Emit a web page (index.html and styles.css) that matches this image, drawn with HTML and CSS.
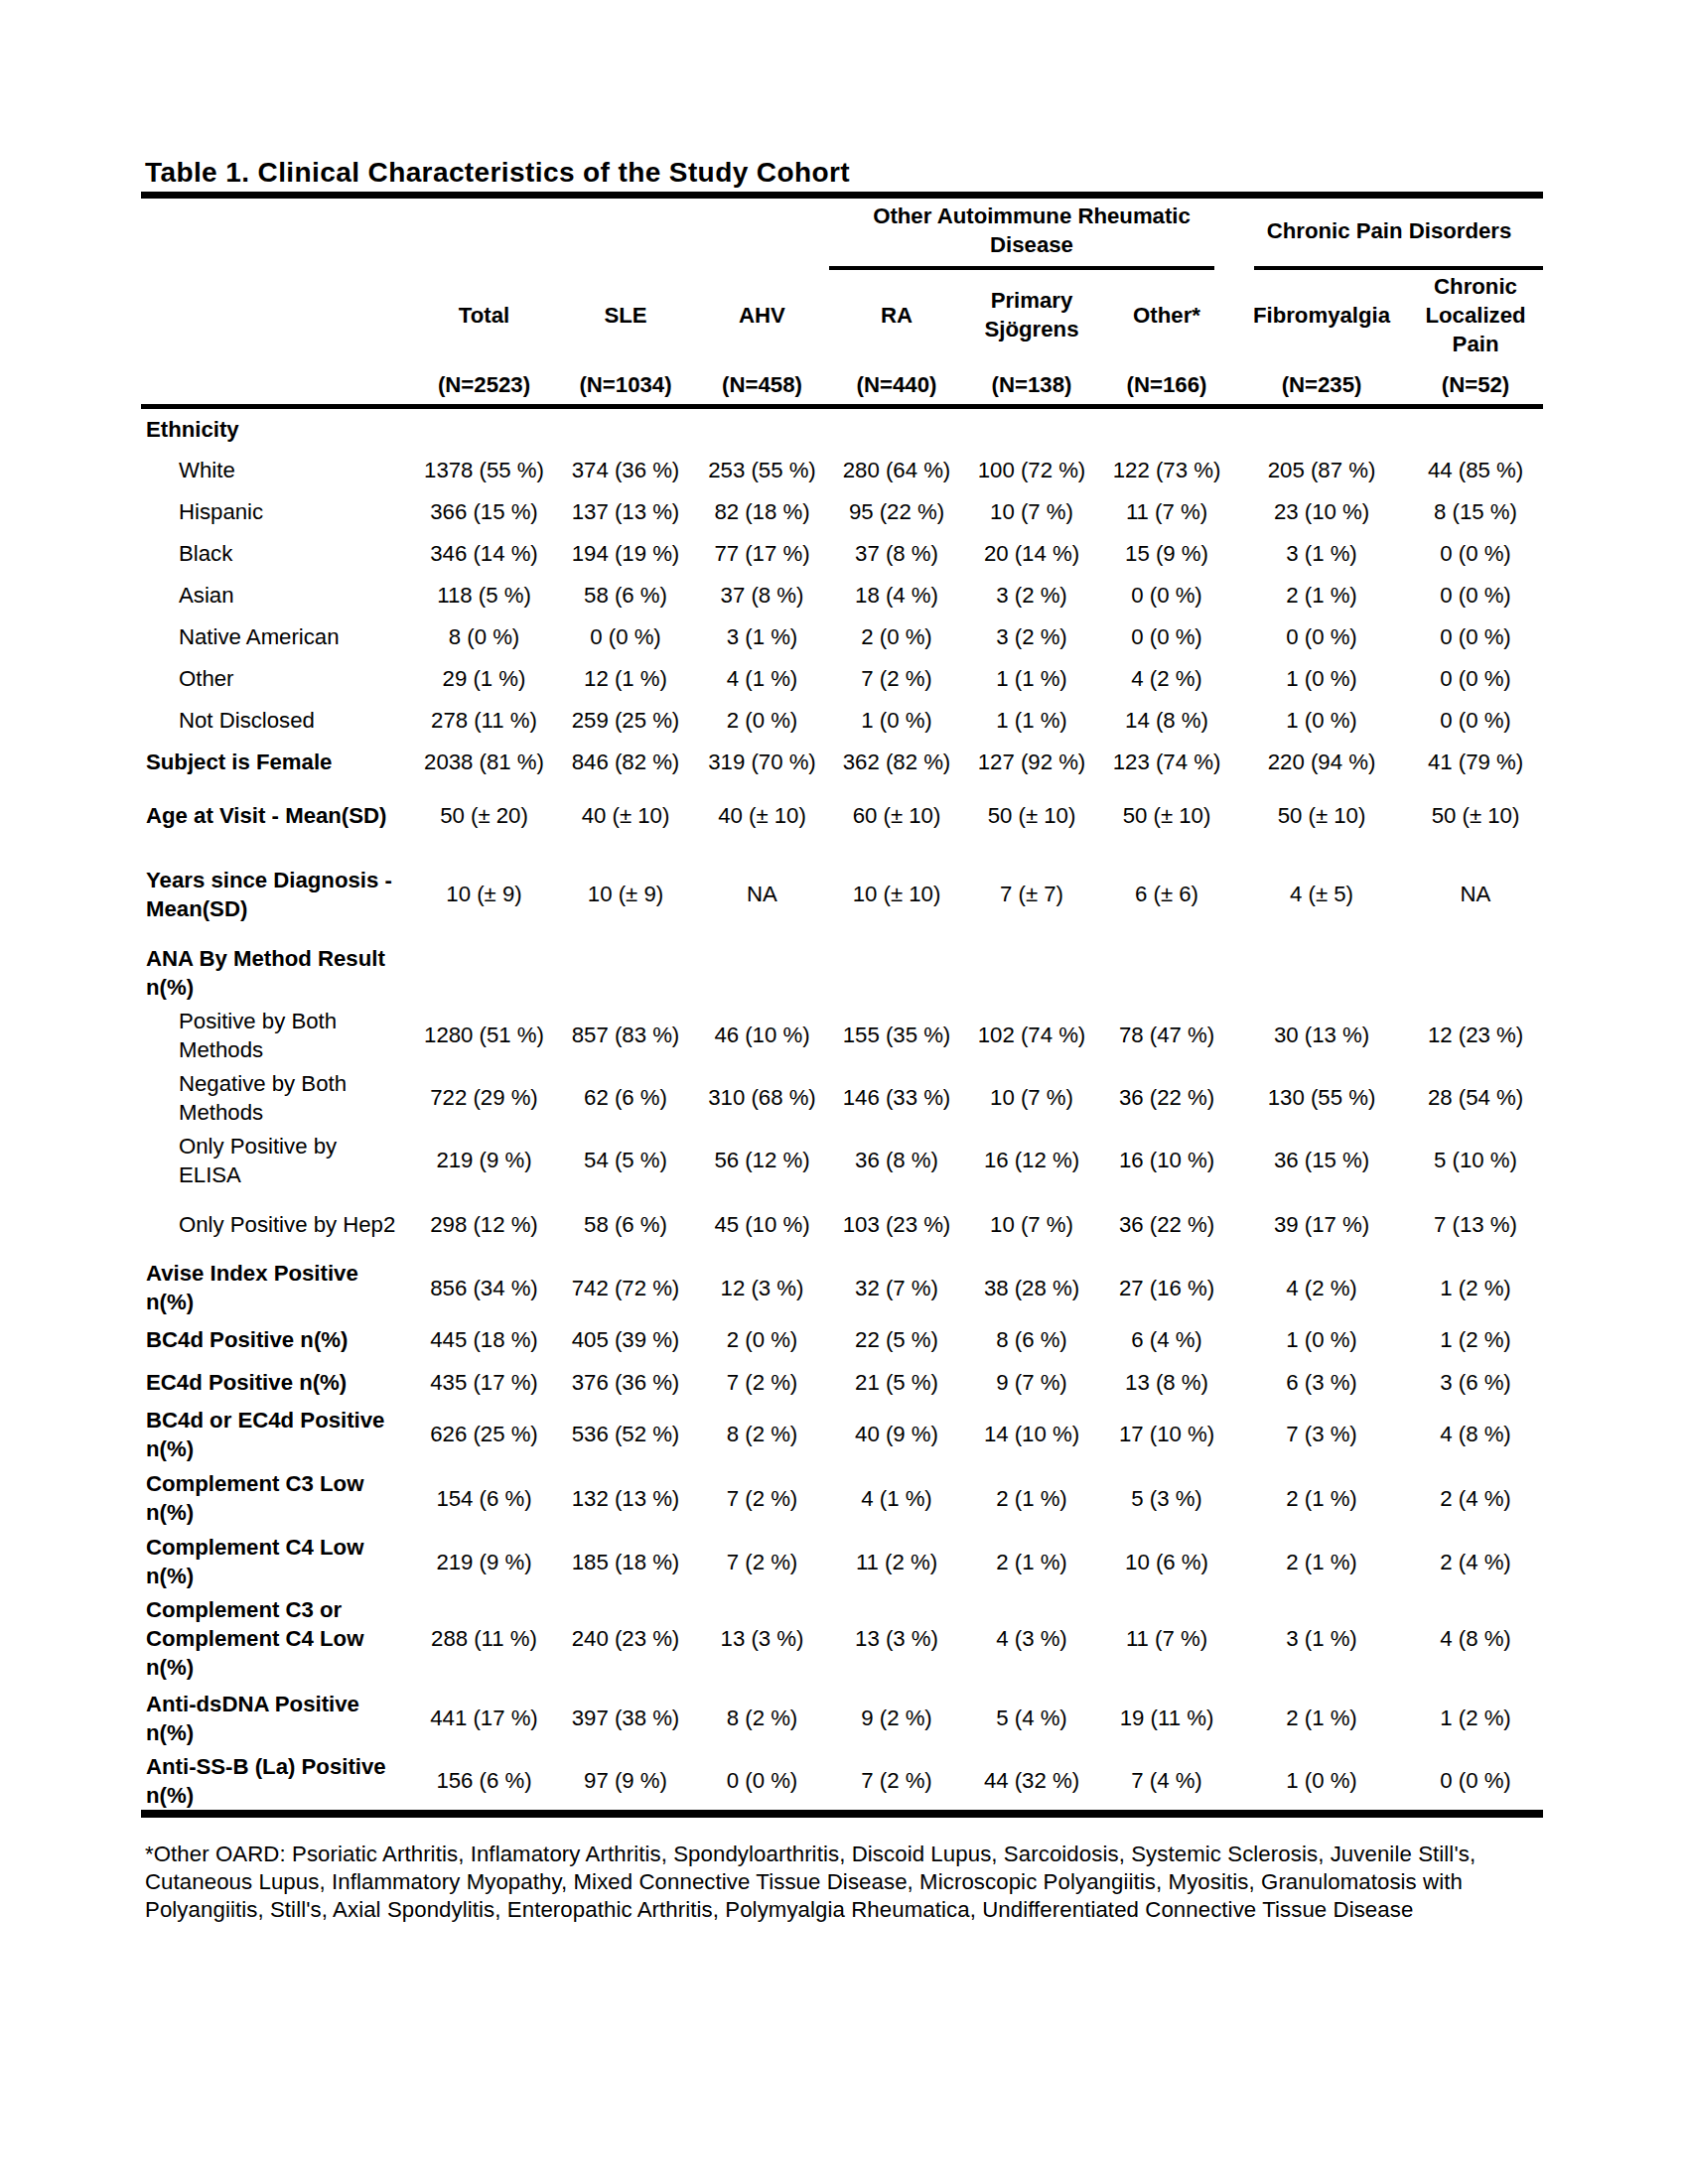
FILE: index.html
```html
<!DOCTYPE html>
<html lang="en">
<head>
<meta charset="utf-8">
<title>Table 1. Clinical Characteristics of the Study Cohort</title>
<link rel="stylesheet" href="styles.css">
</head>
<body>
<main class="page">
  <h1 class="title">Table 1. Clinical Characteristics of the Study Cohort</h1>
  <table class="cohort">
    <colgroup>
      <col class="c-label"><col class="c-total"><col class="c-sle"><col class="c-ahv"><col class="c-ra"><col class="c-pri"><col class="c-oth"><col class="c-fib"><col class="c-chr">
    </colgroup>
    <thead>
      <tr class="r-group">
        <th></th><th></th><th></th><th></th>
        <th colspan="3" class="grp grp-oard">Other Autoimmune Rheumatic<br>Disease</th>
        <th colspan="2" class="grp grp-pain">Chronic Pain Disorders</th>
      </tr>
      <tr class="r-names">
        <th></th>
        <th>Total</th><th>SLE</th><th>AHV</th><th>RA</th><th>Primary<br>Sjögrens</th><th>Other*</th><th>Fibromyalgia</th><th>Chronic<br>Localized<br>Pain</th>
      </tr>
      <tr class="r-n">
        <th></th>
        <th>(N=2523)</th><th>(N=1034)</th><th>(N=458)</th><th>(N=440)</th><th>(N=138)</th><th>(N=166)</th><th>(N=235)</th><th>(N=52)</th>
      </tr>
    </thead>
    <tbody>
      <tr class="r40"><th class="lbl">Ethnicity</th><td></td><td></td><td></td><td></td><td></td><td></td><td></td><td></td></tr>
      <tr class="r42"><th class="lbl sub">White</th><td>1378 (55 %)</td><td>374 (36 %)</td><td>253 (55 %)</td><td>280 (64 %)</td><td>100 (72 %)</td><td>122 (73 %)</td><td>205 (87 %)</td><td>44 (85 %)</td></tr>
      <tr class="r42"><th class="lbl sub">Hispanic</th><td>366 (15 %)</td><td>137 (13 %)</td><td>82 (18 %)</td><td>95 (22 %)</td><td>10 (7 %)</td><td>11 (7 %)</td><td>23 (10 %)</td><td>8 (15 %)</td></tr>
      <tr class="r42"><th class="lbl sub">Black</th><td>346 (14 %)</td><td>194 (19 %)</td><td>77 (17 %)</td><td>37 (8 %)</td><td>20 (14 %)</td><td>15 (9 %)</td><td>3 (1 %)</td><td>0 (0 %)</td></tr>
      <tr class="r42"><th class="lbl sub">Asian</th><td>118 (5 %)</td><td>58 (6 %)</td><td>37 (8 %)</td><td>18 (4 %)</td><td>3 (2 %)</td><td>0 (0 %)</td><td>2 (1 %)</td><td>0 (0 %)</td></tr>
      <tr class="r42"><th class="lbl sub">Native American</th><td>8 (0 %)</td><td>0 (0 %)</td><td>3 (1 %)</td><td>2 (0 %)</td><td>3 (2 %)</td><td>0 (0 %)</td><td>0 (0 %)</td><td>0 (0 %)</td></tr>
      <tr class="r42"><th class="lbl sub">Other</th><td>29 (1 %)</td><td>12 (1 %)</td><td>4 (1 %)</td><td>7 (2 %)</td><td>1 (1 %)</td><td>4 (2 %)</td><td>1 (0 %)</td><td>0 (0 %)</td></tr>
      <tr class="r42"><th class="lbl sub">Not Disclosed</th><td>278 (11 %)</td><td>259 (25 %)</td><td>2 (0 %)</td><td>1 (0 %)</td><td>1 (1 %)</td><td>14 (8 %)</td><td>1 (0 %)</td><td>0 (0 %)</td></tr>
      <tr class="r42"><th class="lbl">Subject is Female</th><td>2038 (81 %)</td><td>846 (82 %)</td><td>319 (70 %)</td><td>362 (82 %)</td><td>127 (92 %)</td><td>123 (74 %)</td><td>220 (94 %)</td><td>41 (79 %)</td></tr>
      <tr class="r66"><th class="lbl">Age at Visit - Mean(SD)</th><td>50 (± 20)</td><td>40 (± 10)</td><td>40 (± 10)</td><td>60 (± 10)</td><td>50 (± 10)</td><td>50 (± 10)</td><td>50 (± 10)</td><td>50 (± 10)</td></tr>
      <tr class="r92"><th class="lbl">Years since Diagnosis -<br>Mean(SD)</th><td>10 (± 9)</td><td>10 (± 9)</td><td>NA</td><td>10 (± 10)</td><td>7 (± 7)</td><td>6 (± 6)</td><td>4 (± 5)</td><td>NA</td></tr>
      <tr class="r66"><th class="lbl">ANA By Method Result<br>n(%)</th><td></td><td></td><td></td><td></td><td></td><td></td><td></td><td></td></tr>
      <tr class="r60"><th class="lbl sub">Positive by Both<br>Methods</th><td>1280 (51 %)</td><td>857 (83 %)</td><td>46 (10 %)</td><td>155 (35 %)</td><td>102 (74 %)</td><td>78 (47 %)</td><td>30 (13 %)</td><td>12 (23 %)</td></tr>
      <tr class="r66"><th class="lbl sub">Negative by Both<br>Methods</th><td>722 (29 %)</td><td>62 (6 %)</td><td>310 (68 %)</td><td>146 (33 %)</td><td>10 (7 %)</td><td>36 (22 %)</td><td>130 (55 %)</td><td>28 (54 %)</td></tr>
      <tr class="r60"><th class="lbl sub">Only Positive by<br>ELISA</th><td>219 (9 %)</td><td>54 (5 %)</td><td>56 (12 %)</td><td>36 (8 %)</td><td>16 (12 %)</td><td>16 (10 %)</td><td>36 (15 %)</td><td>5 (10 %)</td></tr>
      <tr class="r69"><th class="lbl sub">Only Positive by Hep2</th><td>298 (12 %)</td><td>58 (6 %)</td><td>45 (10 %)</td><td>103 (23 %)</td><td>10 (7 %)</td><td>36 (22 %)</td><td>39 (17 %)</td><td>7 (13 %)</td></tr>
      <tr class="r58"><th class="lbl">Avise Index Positive<br>n(%)</th><td>856 (34 %)</td><td>742 (72 %)</td><td>12 (3 %)</td><td>32 (7 %)</td><td>38 (28 %)</td><td>27 (16 %)</td><td>4 (2 %)</td><td>1 (2 %)</td></tr>
      <tr class="r45"><th class="lbl">BC4d Positive n(%)</th><td>445 (18 %)</td><td>405 (39 %)</td><td>2 (0 %)</td><td>22 (5 %)</td><td>8 (6 %)</td><td>6 (4 %)</td><td>1 (0 %)</td><td>1 (2 %)</td></tr>
      <tr class="r42"><th class="lbl">EC4d Positive n(%)</th><td>435 (17 %)</td><td>376 (36 %)</td><td>7 (2 %)</td><td>21 (5 %)</td><td>9 (7 %)</td><td>13 (8 %)</td><td>6 (3 %)</td><td>3 (6 %)</td></tr>
      <tr class="r62"><th class="lbl">BC4d or EC4d Positive<br>n(%)</th><td>626 (25 %)</td><td>536 (52 %)</td><td>8 (2 %)</td><td>40 (9 %)</td><td>14 (10 %)</td><td>17 (10 %)</td><td>7 (3 %)</td><td>4 (8 %)</td></tr>
      <tr class="r67"><th class="lbl">Complement C3 Low<br>n(%)</th><td>154 (6 %)</td><td>132 (13 %)</td><td>7 (2 %)</td><td>4 (1 %)</td><td>2 (1 %)</td><td>5 (3 %)</td><td>2 (1 %)</td><td>2 (4 %)</td></tr>
      <tr class="r61"><th class="lbl">Complement C4 Low<br>n(%)</th><td>219 (9 %)</td><td>185 (18 %)</td><td>7 (2 %)</td><td>11 (2 %)</td><td>2 (1 %)</td><td>10 (6 %)</td><td>2 (1 %)</td><td>2 (4 %)</td></tr>
      <tr class="r94"><th class="lbl">Complement C3 or<br>Complement C4 Low<br>n(%)</th><td>288 (11 %)</td><td>240 (23 %)</td><td>13 (3 %)</td><td>13 (3 %)</td><td>4 (3 %)</td><td>11 (7 %)</td><td>3 (1 %)</td><td>4 (8 %)</td></tr>
      <tr class="r66"><th class="lbl">Anti-dsDNA Positive<br>n(%)</th><td>441 (17 %)</td><td>397 (38 %)</td><td>8 (2 %)</td><td>9 (2 %)</td><td>5 (4 %)</td><td>19 (11 %)</td><td>2 (1 %)</td><td>1 (2 %)</td></tr>
      <tr class="r60"><th class="lbl">Anti-SS-B (La) Positive<br>n(%)</th><td>156 (6 %)</td><td>97 (9 %)</td><td>0 (0 %)</td><td>7 (2 %)</td><td>44 (32 %)</td><td>7 (4 %)</td><td>1 (0 %)</td><td>0 (0 %)</td></tr>
    </tbody>
  </table>
  <p class="footnote">*Other OARD: Psoriatic Arthritis, Inflamatory Arthritis, Spondyloarthritis, Discoid Lupus, Sarcoidosis, Systemic Sclerosis, Juvenile Still's,<br>Cutaneous Lupus, Inflammatory Myopathy, Mixed Connective Tissue Disease, Microscopic Polyangiitis, Myositis, Granulomatosis with<br>Polyangiitis, Still's, Axial Spondylitis, Enteropathic Arthritis, Polymyalgia Rheumatica, Undifferentiated Connective Tissue Disease</p>
</main>
</body>
</html>
```

FILE: styles.css
```css
html, body {
  margin: 0;
  padding: 0;
  background: #ffffff;
}

.page {
  width: 1412px;
  padding: 157px 0 0 142px;
  color: #000;
  font-family: "Liberation Sans", Arial, sans-serif;
  font-size: 22.2px;
}

.title {
  margin: 0 0 2px;
  padding-left: 4px;
  font-family: "Liberation Sans", Arial, sans-serif;
  font-weight: 700;
  font-size: 28px;
  line-height: 34px;
  letter-spacing: 0.4px;
}

.cohort {
  width: 1412px;
  table-layout: fixed;
  border-collapse: separate;
  border-spacing: 0;
  border-top: 7px solid #000;
  border-bottom: 8px solid #000;
  line-height: 29px;
  font-size: 22.2px;
}

.c-label { width: 274px; }
.c-total { width: 143px; }
.c-sle { width: 142px; }
.c-ahv { width: 133px; }
.c-ra { width: 138px; }
.c-pri { width: 134px; }
.c-oth { width: 138px; }
.c-fib { width: 174px; }
.c-chr { width: 136px; }

.cohort th,
.cohort td {
  padding: 0;
  text-align: center;
  vertical-align: middle;
  white-space: nowrap;
}

.cohort thead th {
  font-weight: 700;
}

.cohort tbody th,
.cohort tbody td {
  padding-top: 1px;
}

.r-group { height: 72px; }
.r-group th { padding-bottom: 8px; }

.grp {
  background-image: linear-gradient(#000, #000);
  background-repeat: no-repeat;
  background-position-y: 100%;
}

.grp-oard {
  background-size: calc(100% - 22px) 4px;
  background-position-x: 1px;
}

.grp-pain {
  background-size: calc(100% - 19px) 4px;
  background-position-x: 19px;
}

.r-names { height: 90px; }
.r-n { height: 50px; }
.r-n th {
  padding-top: 6px;
  border-bottom: 5px solid #000;
}

.cohort .lbl {
  text-align: left;
  font-weight: 700;
  padding-left: 5px;
}

.cohort .lbl.sub {
  font-weight: 400;
  padding-left: 38px;
}

.r40 { height: 40px; }
.r42 { height: 42px; }
.r45 { height: 45px; }
.r58 { height: 58px; }
.r60 { height: 60px; }
.r61 { height: 61px; }
.r62 { height: 62px; }
.r66 { height: 66px; }
.r67 { height: 67px; }
.r69 { height: 69px; }
.r92 { height: 92px; }
.r94 { height: 94px; }

.footnote {
  margin: 23px 0 0;
  padding-left: 4px;
  font-size: 22.2px;
  line-height: 28px;
  letter-spacing: 0.1px;
  white-space: nowrap;
}
```
